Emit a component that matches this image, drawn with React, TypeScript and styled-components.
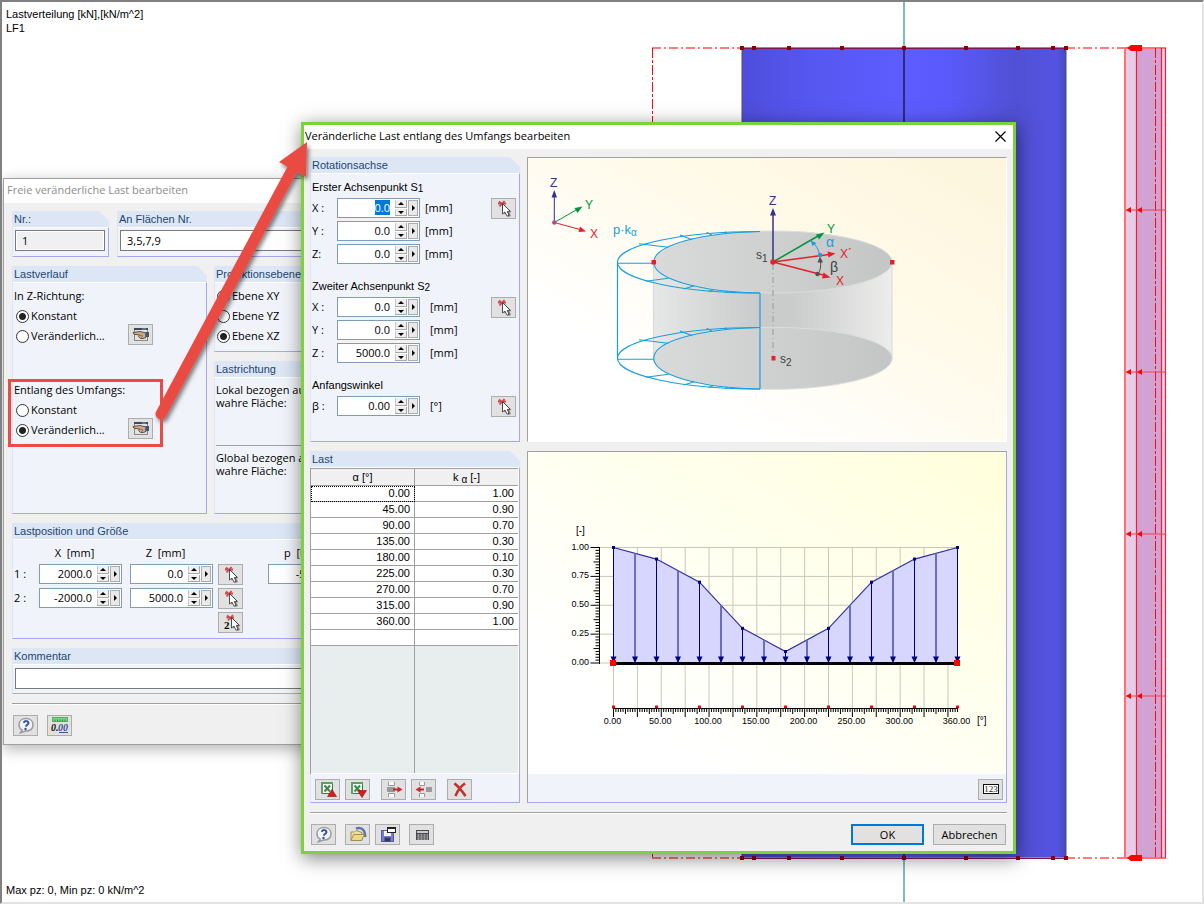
import React, { useEffect, useRef } from 'react';
import styled, { createGlobalStyle, css } from 'styled-components';

const tahoma = "'Open Sans', 'Noto Sans', sans-serif";
const arial = "'Liberation Sans', Arial, sans-serif";

const GlobalStyle = createGlobalStyle`
  *, *::before, *::after { box-sizing: border-box; }
  body { margin: 0; background: #fff; color: #000; font: 11px/14px ${tahoma}; }
  input, button { font: inherit; color: inherit; margin: 0; }
`;

/* ---------- desktop and windows ---------- */

const Desktop = styled.main`
  position: relative;
  display: flex;
  flex-direction: column;
  justify-content: space-between;
  height: 100vh;
  padding: 5px 5px 5px 4px;
  overflow: hidden;
  border-style: solid;
  border-width: 2px;
  border-color: #808080 #e3e3e3 #e3e3e3 #808080;
  font: 11px/14px ${arial};
`;

const Caption = styled.p`
  margin: 0;
  white-space: pre-line;
`;

const Scene = styled.svg`
  position: absolute;
  inset: -2px;
  width: calc(100% + 4px);
  height: calc(100% + 4px);
`;

const Callout = styled.svg`
  position: absolute;
  left: -2px;
  top: -2px;
  width: 320px;
  height: 460px;
  pointer-events: none;
`;

const Dialog = styled.section`
  position: absolute;
  display: flex;
  flex-direction: column;
  background: #f0f0f0;
  font: 11px/14px ${tahoma};
`;

const BackDialog = styled(Dialog)`
  left: 1px;
  top: 176px;
  width: 640px;
  border: 1px solid #a0a0a0;
  box-shadow: 0 4px 14px rgba(0, 0, 0, 0.3);
`;

const FrontDialog = styled(Dialog)`
  left: 299px;
  top: 120px;
  width: 715px;
  border: 3px solid #7dd13c;
  box-shadow: 1px 4px 18px rgba(0, 0, 0, 0.5);
`;

const TitleBar = styled.header<{ $inactive?: boolean }>`
  display: flex;
  align-items: center;
  justify-content: space-between;
  height: 24px;
  padding: 0 7px 2px ${p => (p.$inactive ? 3 : 1)}px;
  background: #fff;
  color: ${p => (p.$inactive ? '#8c8c8c' : '#000')};
`;

const TitleText = styled.h1`
  margin: 0;
  font: inherit;
`;

const CloseButton = styled.button`
  display: flex;
  padding: 0;
  border: 0;
  background: none;
`;

const BackBody = styled.div`
  display: flex;
  flex-direction: column;
  gap: 9px;
  padding: 8px;
`;

const BackRow = styled.div<{ $first: number; $gap: number }>`
  display: grid;
  grid-template-columns: ${p => p.$first}px 1fr;
  gap: ${p => p.$gap}px;
`;

const Stack = styled.div`
  display: flex;
  flex-direction: column;
  gap: 9px;
`;

const Footer = styled.footer`
  display: flex;
  gap: 9px;
  padding: 11px 1px 0;
  border-top: 1px solid #a0a0a0;
  box-shadow: inset 0 1px 0 #fff;
`;

/* ---------- group boxes ---------- */

const GroupBox = styled.section<{ $h?: number; $grow?: boolean }>`
  display: flex;
  flex-direction: column;
  min-width: 0;
  ${p => p.$h && css`height: ${p.$h}px;`}
  ${p => p.$grow && css`flex: 1;`}
`;

const GroupTitle = styled.h2`
  height: 16px;
  margin: 0;
  padding: 0 2px;
  background: #dce6f5;
  color: #1e4673;
  font: 11px/16px ${arial};
  clip-path: polygon(0 0, calc(100% - 10px) 0, 100% 10px, 100% 100%, 0 100%);
`;

const GroupBody = styled.div<{ $pad?: string }>`
  display: flex;
  flex: 1;
  flex-direction: column;
  min-height: 0;
  padding: ${p => p.$pad ?? '3px'};
  background: #f0f4fa;
  border: 1px solid #a8a8ec;
  border-top-color: #fff;
  border-left-color: #dce6f8;
`;

/* ---------- controls ---------- */

const TextInput = styled.input`
  width: 100%;
  height: 21px;
  padding: 0 6px;
  border: 1px solid #7a7a7a;
  border-radius: 0;
  background: #fff;
  &:read-only { background: #f0f0f0; box-shadow: inset 0 0 0 1px #fff; }
`;

const NarrowField = styled.div`
  padding-right: 1px;
`;

const IconButton = styled.button`
  display: flex;
  align-items: center;
  justify-content: center;
  flex: none;
  width: 25px;
  height: 21px;
  padding: 0;
  border: 1px solid #adadad;
  border-radius: 0;
  background: #e1e1e1;
`;

const PushButton = styled.button<{ $default?: boolean }>`
  width: 73px;
  height: 21px;
  padding: 0;
  border: ${p => (p.$default ? '2px solid #0078d7' : '1px solid #adadad')};
  border-radius: 0;
  background: #e1e1e1;
`;

const Line = styled.div`
  display: flex;
  align-items: center;
  justify-content: space-between;
  height: 20px;
`;

const Choice = styled.label`
  display: flex;
  align-items: center;
  gap: 2px;
  height: 20px;
  padding-left: 2px;
`;

const Radio = styled.input`
  appearance: none;
  width: 13px;
  height: 13px;
  margin: 0;
  border: 1px solid #333;
  border-radius: 50%;
  background: #fff;
  &:checked { background: radial-gradient(circle, #222 0 3px, #fff 4px); }
`;

const Spin = styled.div`
  display: grid;
  grid-template-columns: 1fr 12px 11px;
  gap: 1px;
  width: 83px;
  height: 20px;
  border: 1px solid #7f9db9;
  background: #fff;
`;

const SpinInput = styled.input`
  width: 100%;
  min-width: 0;
  height: 17px;
  padding: 0 4px 0 0;
  border: 0;
  outline: 0;
  background: transparent;
  text-align: right;
  &::selection { background: #0078d7; color: #fff; }
`;

const SpinPair = styled.span`
  display: grid;
  grid-template-rows: 1fr 1fr;
  gap: 1px;
  padding: 1px 0;
`;

const SpinButton = styled.button`
  display: flex;
  align-items: center;
  justify-content: center;
  min-width: 0;
  padding: 0;
  border: 0;
  border-radius: 0;
  background: #efefef;
  box-shadow: inset -1px -1px 0 #a8a8a8, inset 1px 0 0 #c8c8c8;
`;

const MoreButton = styled(SpinButton)`
  margin: 1px 1px 1px 0;
  border: 1px solid #adadad;
  background: #e9e9e9;
  box-shadow: none;
`;

function SpinBox({ value, label, selected }: { value: string; label: string; selected?: boolean }) {
  const ref = useRef<HTMLInputElement>(null);
  useEffect(() => {
    if (selected) {
      ref.current?.focus();
      ref.current?.select();
    }
  }, [selected]);
  return (
    <Spin>
      <SpinInput ref={ref} defaultValue={value} aria-label={label} />
      <SpinPair>
        <SpinButton aria-label={label + ' +'}>
          <svg width="6" height="3"><path d="M0 3L3 0L6 3Z" /></svg>
        </SpinButton>
        <SpinButton aria-label={label + ' −'}>
          <svg width="6" height="3"><path d="M0 0L3 3L6 0Z" /></svg>
        </SpinButton>
      </SpinPair>
      <MoreButton aria-label={label + ' …'}>
        <svg width="3" height="6"><path d="M0 0L3 3L0 6Z" /></svg>
      </MoreButton>
    </Spin>
  );
}

/* ---------- icons ---------- */

const cursor = (
  <g>
    <path d="M1.500 1L1.500 11L3.500 9.500L6 13.500L8.500 12.500L7 9L9 8.500Z" fill="#888" />
    <path d="M0 0L0 10.500L2.400 8.600L4.600 12.700L6.600 11.800L4.800 8L7.600 7.600Z" fill="#fff" stroke="#3a3a3a" strokeWidth="0.900" />
  </g>
);

const bubble = (
  <g>
    <path d="M10 1.500C6 1.500 3 4 3 7.700C3 10.300 4.200 12 6.200 13L4.500 15.800L9.500 14C14.500 14.200 17 11.500 17 7.700C17 4 14 1.500 10 1.500Z" fill="#f2f3f6" stroke="#9a9ca2" strokeWidth="1.500" />
    <path d="M7.800 5.800C8.200 3.300 12.800 3.700 12.400 6.200C12.100 7.800 10.200 7.700 9.900 9.700" fill="none" stroke="#34529c" strokeWidth="2" />
    <circle cx="9.500" cy="12" r="1.200" fill="#34529c" />
  </g>
);

const sheet = (
  <g>
    <rect x="3.500" y="1.500" width="11" height="11" fill="#f2f8f2" stroke="#3a7d48" />
    <path d="M3 1H15V3H5V13H3Z" fill="#5f9d6a" />
    <path d="M6.500 4.500L12 10.500M12 4.500L6.500 10.500" stroke="#3c8a4a" strokeWidth="2" />
  </g>
);

const icons: Record<string, React.ReactNode> = {
  help: bubble,
  pick: (
    <g>
      <path d="M5 1.500L10.500 6.500M10.500 1L5.500 6.500M4 3.500H12" stroke="#cc4a50" strokeWidth="1.800" />
      <g transform="translate(8.500 3.500)">{cursor}</g>
    </g>
  ),
  pickTwo: (
    <g>
      <path d="M6 1.500L12 6M12 1L7 6.500M5.500 3.500H13" stroke="#cc4a50" strokeWidth="1.800" />
      <g transform="translate(10.500 3.500)">{cursor}</g>
      <text x="3" y="15" fontFamily="Liberation Serif, serif" fontWeight="700" fontSize="11">2</text>
    </g>
  ),
  hand: (
    <g>
      <rect x="3.500" y="2.500" width="13" height="12" fill="#dfe2e4" stroke="#8a8a8a" />
      <path d="M3 3H17" stroke="#3f4a58" strokeWidth="2" />
      <path d="M11 3H15" stroke="#7d9fd0" strokeWidth="1" />
      <path d="M2 6.500L9 5.500L15 7V11.500L12 12.500L9.500 12.500L7.500 10.500L8.500 9L3 8.300Z" fill="#cda988" stroke="#5a4838" strokeWidth="0.900" />
      <path d="M8.500 9L11.500 9.500L10.500 12" fill="none" stroke="#80664e" strokeWidth="0.800" />
      <path d="M14.500 6H18V11H14.500Z" fill="#3d5678" />
    </g>
  ),
  units: (
    <g>
      <rect x="2.500" y="0.500" width="15" height="4" fill="#79cf7d" stroke="#58b060" />
      <path d="M5 4.500V2.500M7.500 4.500V2.500M10 4.500V2.500M12.500 4.500V2.500M15 4.500V2.500" stroke="#2f7f38" strokeWidth="0.800" />
      <text x="1" y="14" fontFamily="Liberation Serif, serif" fontStyle="italic" fontWeight="700" fontSize="10" fill="#111">0.</text>
      <text x="8" y="14" fontFamily="Liberation Serif, serif" fontStyle="italic" fontWeight="700" fontSize="10" fill="#3a5090">00</text>
      <path d="M9 15.500H18" stroke="#3a5090" />
    </g>
  ),
  excelUp: (
    <g>
      {sheet}
      <path d="M14 8.500L18.500 15.500H9.500Z" fill="#e01818" stroke="#8e0f0f" strokeWidth="0.600" />
    </g>
  ),
  excelDown: (
    <g>
      {sheet}
      <path d="M14 16.500L18.500 9.500H9.500Z" fill="#e01818" stroke="#8e0f0f" strokeWidth="0.600" />
    </g>
  ),
  insertRow: (
    <g>
      <path d="M4.500 1V4.500H10.500V1M4.500 16V12.500H10.500V16" fill="#fafafa" stroke="#999" />
      <rect x="3" y="6" width="8" height="5" fill="#9a9a9a" />
      <path d="M9 8.500H15" stroke="#b8282e" strokeWidth="2" />
      <path d="M13.500 5.500L18.500 8.500L13.500 11.500Z" fill="#c8282e" />
    </g>
  ),
  removeRow: (
    <g>
      <path d="M5.500 1V4.500H10.500V1M5.500 16V12.500H10.500V16" fill="#fafafa" stroke="#999" />
      <rect x="12" y="6" width="6" height="5" fill="#9a9a9a" />
      <path d="M5 8.500H10" stroke="#b8282e" strokeWidth="2" />
      <path d="M6.500 5.500L1.500 8.500L6.500 11.500Z" fill="#c8282e" />
    </g>
  ),
  erase: (
    <g>
      <path d="M4.500 2.500C8 5 12 10 15.500 15M15 2.500C11 5 7.500 10 5.500 15" fill="none" stroke="#8a3a3a" strokeWidth="2.600" />
      <path d="M4.500 2.500C8 5 12 10 15.500 15M15 2.500C11 5 7.500 10 5.500 15" fill="none" stroke="#dc2a2a" strokeWidth="1.500" />
    </g>
  ),
  open: (
    <g>
      <path d="M8 2.500C13 0.500 18 4 17 11" fill="none" stroke="#5877a8" strokeWidth="2.500" />
      <path d="M3 14.500V6H6.500L8 4.500L14 6.500V14.500Z" fill="#efe3a4" stroke="#a08f50" />
      <path d="M3 14.500L5.500 8.500H16.500L13.500 14.500Z" fill="#ecd987" stroke="#a08f50" />
    </g>
  ),
  save: (
    <g>
      <rect x="3.500" y="4.500" width="12" height="11" fill="#7a7ad0" stroke="#5a5aa4" />
      <rect x="6" y="5" width="7" height="5" fill="#f2f2f8" />
      <rect x="6.500" y="11.500" width="6" height="4" fill="#333a55" />
      <rect x="9.500" y="1.500" width="8" height="5" fill="#fff" stroke="#222" />
      <path d="M9 2H18" stroke="#222" strokeWidth="2" />
    </g>
  ),
  calc: (
    <g>
      <path d="M4 4H17V14H4Z" fill="#4a4a4e" />
      <rect x="5" y="5" width="11" height="2" fill="#c6ccc8" />
      <path d="M5.500 9H16M5.500 11H16M5.500 13H16" stroke="#e8e8e8" strokeDasharray="2 1" />
    </g>
  ),
  digits: (
    <g>
      <rect x="2.500" y="3.500" width="15" height="9" fill="#fff" stroke="#111" />
      <text x="10" y="11" textAnchor="middle" fontFamily="Liberation Serif, serif" fontSize="9" fill="#222">123</text>
    </g>
  ),
};

function Tool({ icon, label }: { icon: string; label: string }) {
  return (
    <IconButton aria-label={label}>
      <svg width="20" height="17" viewBox="0 0 20 17">{icons[icon]}</svg>
    </IconButton>
  );
}

/* ---------- background model view ---------- */

const nodeXs = [742, 754, 789, 842, 904, 966, 1018, 1053, 1066];

function ModelScene() {
  return (
    <Scene viewBox="0 0 1204 904" aria-hidden="true">
      <defs>
        <linearGradient id="tank">
          <stop offset="0" stopColor="#4e4edb" />
          <stop offset="0.200" stopColor="#5656f0" />
          <stop offset="0.500" stopColor="#5d5dff" />
          <stop offset="0.630" stopColor="#5a5afc" />
          <stop offset="0.850" stopColor="#5050d4" />
          <stop offset="0.970" stopColor="#5454e2" />
          <stop offset="1" stopColor="#4848c4" />
        </linearGradient>
      </defs>
      <path d="M904 2V902" stroke="#80bdbd" strokeWidth="2" />
      <rect x="742" y="48" width="324" height="810" fill="url(#tank)" stroke="#4a4a78" />
      <path d="M904 48V858" stroke="#2c2c80" strokeWidth="2" />
      <path d="M652 48H742M1066 48H1128M652 858H742M1066 858H1128" stroke="#ff7c7c" strokeWidth="2" strokeDasharray="9 3 2 3" />
      <path d="M652.500 48V858" stroke="#ee1010" strokeDasharray="10 2 3 2" />
      <path d="M742 47.500H1066M742 857.500H1066" stroke="#f06080" />
      <path d="M742 48.500H1066M742 858.500H1066" stroke="#801850" />
      {[48, 858].map(y => nodeXs.map(x => <rect key={x + '-' + y} x={x - 2} y={y - 2} width="4" height="4" fill="#8c0000" />))}
      <rect x="1125" y="48" width="41" height="810" fill="#e6cce6" />
      <rect x="1137" y="48" width="25" height="810" fill="#d2a2d2" />
      <path d="M1125 48H1166M1125 858H1166M1125 48V858" stroke="#ff7070" strokeWidth="2" />
      <path d="M1136.500 48V858M1161.500 48V858M1165.500 48V858" stroke="#f02030" strokeWidth="1.200" />
      <path d="M1155.500 48V858" stroke="#ee1010" strokeDasharray="10 2 3 2" />
      {[48, 858].map(y => (
        <path key={y} d={`M1127 ${y}L1131 ${y - 3}H1142V${y + 3}H1131Z`} fill="#f00" />
      ))}
      {[210, 372, 534, 696].map(y => (
        <g key={y} fill="#f00">
          <path d={`M1126 ${y}H1166`} stroke="#ee4050" />
          <path d={`M1126 ${y}L1131 ${y - 3}V${y + 3}ZM1137 ${y}L1142 ${y - 3}V${y + 3}Z`} />
        </g>
      ))}
    </Scene>
  );
}

/* ---------- front dialog panels ---------- */

const FrontBody = styled.div`
  display: flex;
  flex-direction: column;
  gap: 9px;
  padding: 8px 6px 6px;
`;

const Panels = styled.div`
  display: grid;
  grid-template-columns: 210px 1fr;
  grid-template-rows: 285px 352px;
  gap: 9px 7px;
`;

const DrawingPanel = styled.div`
  border: 1px solid #a0a0a0;
  border-right-color: #fff;
  border-bottom-color: #fff;
  background: linear-gradient(to top right, #fff 25%, #fffaea 60%, #fdf5dc);
`;

const ChartPanel = styled.div`
  display: flex;
  flex-direction: column;
  border: 1px solid #a0a0a0;
  border-right-color: #a8a8ec;
  border-bottom-color: #a8a8ec;
  background: #f0f4fa;
`;

const ChartArea = styled.div`
  flex: 1;
  min-height: 0;
  border-bottom: 1px solid #fff;
  background: linear-gradient(to top right, #fff 20%, #fffff0 55%, #ffffdc);
`;

const Drawing = styled.svg`
  display: block;
  width: 100%;
  height: 100%;
  font-family: ${arial};
`;

const Toolbar = styled.div<{ $end?: boolean }>`
  display: flex;
  justify-content: ${p => (p.$end ? 'flex-end' : 'flex-start')};
  gap: 5px;
  padding: 5px ${p => (p.$end ? 3 : 4)}px 2px;
`;

const ToolGroup = styled.div`
  display: flex;
  gap: 5px;
`;

const SpacedGroup = styled(ToolGroup)`
  margin-right: 6px;
`;

const PointSection = styled.section`
  display: grid;
  grid-template-columns: 25px 83px 1fr 25px;
  row-gap: 3px;
  align-items: center;
  margin-bottom: 14px;
`;

const PointTitle = styled.h3`
  grid-column: 1 / -1;
  height: 16px;
  margin: 0;
  font: 11px/16px ${arial};
  sub { font-size: 10px; line-height: 0; vertical-align: -1px; }
`;

const Unit = styled.span<{ $wide?: boolean }>`
  padding-left: ${p => (p.$wide ? 10 : 5)}px;
`;

const PushCell = styled.span`
  grid-column: 4;
  height: 20px;
`;

type Row = { axis: string; value: string };

function Point({ title, rows, unit, wide, selected }: {
  title: React.ReactNode; rows: Row[]; unit: string; wide?: boolean; selected?: boolean;
}) {
  return (
    <PointSection>
      <PointTitle>{title}</PointTitle>
      {rows.map((r, i) => (
        <React.Fragment key={r.axis}>
          <span>{r.axis}</span>
          <SpinBox value={r.value} label={r.axis} selected={selected && i === 0} />
          <Unit $wide={wide}>{unit}</Unit>
          {i === 0 ? <PushCell><Tool icon="pick" label="Auswählen" /></PushCell> : <span />}
        </React.Fragment>
      ))}
    </PointSection>
  );
}

const Table = styled.table`
  width: 100%;
  border-collapse: collapse;
  table-layout: fixed;
  background: #fff;
  font: 11px/15px ${arial};
  th, td { height: 16px; padding: 0 4px; border-bottom: 1px solid #a0a0a0; text-align: right; }
  th { height: 17px; background: #f0f0f0; border-top: 1px solid #a0a0a0; font-weight: 400; text-align: center; }
  th:first-child, td:first-child { border-right: 1px solid #a0a0a0; }
  sub { font-size: 10px; line-height: 0; vertical-align: -2px; }
  tbody tr:first-child td:first-child { outline: 1px dotted #000; outline-offset: -1px; }
`;

const TableArea = styled.div`
  display: flex;
  flex: 1;
  flex-direction: column;
  margin-left: -1px;
  border-left: 1px solid #a0a0a0;
  border-right: 1px solid #fff;
`;

const TableRest = styled.div`
  display: grid;
  grid-template-columns: 1fr 1fr;
  flex: 1;
  background: #e8eeee;
  border-bottom: 1px solid #fff;
`;

const RestCell = styled.div`
  &:first-child { border-right: 1px solid #a0a0a0; }
`;

const FooterTools = styled.div`
  display: flex;
  flex: 1;
  gap: 9px;
`;

const loads: [number, number][] = [
  [0, 1], [45, 0.9], [90, 0.7], [135, 0.3], [180, 0.1], [225, 0.3], [270, 0.7], [315, 0.9], [360, 1],
];

/* ---------- cylinder sketch ---------- */

const rungs = [
  'M653.700 263.300H617.300', 'M639 243.700L668.300 247.300', 'M680 235L692.300 239.700', 'M706.700 232.300L711.700 235',
  'M725 231.700L727 233.300', 'M645.700 281.300L668.300 278.300', 'M683.700 289L694.300 285.700',
  'M708.300 291.700L713.300 289.700', 'M725 292.700L728 291.300',
].join('');

function Ring() {
  return (
    <g fill="none" stroke="#18a0dc" strokeWidth="1.100">
      <path d="M760 231.500A142.500 30.750 0 0 0 760 293" />
      <path d="M760 231.500C700 233 653.700 245 653.700 262.300C653.700 279 700 292 760 293" />
      <path d={rungs} />
    </g>
  );
}

function CylinderSketch() {
  return (
    <Drawing viewBox="528 158 478 283" role="img" aria-label="Rotationsachse">
      <defs>
        <linearGradient id="side">
          <stop offset="0" stopColor="#e6e7e7" />
          <stop offset="0.450" stopColor="#c9caca" />
          <stop offset="0.600" stopColor="#cbcccc" />
          <stop offset="1" stopColor="#ededec" />
        </linearGradient>
        <linearGradient id="lid">
          <stop offset="0" stopColor="#d9dada" />
          <stop offset="1" stopColor="#c4c5c5" />
        </linearGradient>
      </defs>
      <path d="M653.500 262V358A119.300 31 0 0 0 892 358V262Z" fill="url(#side)" stroke="#d6d7d7" />
      <ellipse cx="772.800" cy="358.300" rx="119.300" ry="31" fill="url(#lid)" stroke="#dcdddd" />
      <ellipse cx="772.800" cy="262" rx="119.300" ry="31" fill="url(#lid)" stroke="#dcdddd" />
      <path d="M773 264V356" stroke="#999" strokeDasharray="6 3 1 3" />
      <Ring />
      <g transform="translate(0 96)"><Ring /></g>
      <path d="M617.500 263V359M760 293V389" stroke="#18a0dc" strokeWidth="1.200" />
      <g strokeWidth="1.500">
        <path d="M773 262V214" stroke="#35308c" />
        <path d="M773 208L770 215.500H776Z" fill="#35308c" />
        <path d="M773 262L818 236" stroke="#009540" />
        <path d="M824.500 232.500L816 234.500L819 239.500Z" fill="#009540" />
        <path d="M773 262L829 254.500M773 262L823 275" stroke="#e2222a" />
        <path d="M835.500 253.500L827.500 251.500L828.500 257.500ZM830.500 277.500L823.500 272.500L822 278.500Z" fill="#e2222a" />
      </g>
      <path d="M820 255Q818 247 813 242" fill="none" stroke="#18a0dc" />
      <path d="M810.500 240.500L816.500 243L812.500 246Z" fill="#18a0dc" />
      <circle cx="820" cy="255" r="2.200" fill="#18a0dc" />
      <path d="M818 274Q821.500 269 820.500 261" fill="none" stroke="#505050" />
      <path d="M820 256.500L817.500 262.500H823Z" fill="#505050" />
      <circle cx="817.500" cy="274" r="2.200" fill="#505050" />
      <circle cx="773" cy="262" r="2.700" fill="#e2222a" />
      <path d="M651.500 260H656V264.500H651.500ZM890 260H894.500V264.500H890ZM771.500 356H775.500V360.500H771.500Z" fill="#e2222a" />
      <path d="M554.300 222V196" stroke="#35308c" />
      <path d="M554.300 190L551.500 197.500H557Z" fill="#35308c" />
      <path d="M554.300 222.500L577 209.500" stroke="#009540" />
      <path d="M582.500 206.500L574.500 208L577.500 213Z" fill="#009540" />
      <path d="M554.300 222.500L580 229.500" stroke="#e2222a" />
      <path d="M586 231.500L580 226.500L578.500 232Z" fill="#e2222a" />
      <circle cx="554.300" cy="222.500" r="2.200" fill="#b04a90" />
      <g fontSize="12">
        <text x="550" y="187" fill="#35308c">Z</text>
        <text x="585" y="209" fill="#009540">Y</text>
        <text x="590" y="238" fill="#e2222a">X</text>
        <text x="769" y="205" fill="#35308c">Z</text>
        <text x="827" y="233" fill="#009540">Y</text>
        <text x="840" y="258" fill="#e2222a">X´</text>
        <text x="836" y="285" fill="#e2222a">X</text>
        <text x="613" y="234" fill="#18a0dc" fontSize="13">p·k<tspan fontSize="10" dy="2">α</tspan></text>
        <text x="826" y="247" fill="#18a0dc" fontSize="14">α</text>
        <text x="830" y="272" fill="#404040" fontSize="14">β</text>
        <text x="756" y="259" fill="#404040">s<tspan fontSize="10" dy="3">1</tspan></text>
        <text x="780" y="363" fill="#404040">s<tspan fontSize="10" dy="3">2</tspan></text>
      </g>
    </Drawing>
  );
}

/* ---------- load chart ---------- */

const px = (deg: number) => 613.5 + (deg / 360) * 344;
const py = (k: number) => 663 - k * 115.5;

function factorAt(deg: number) {
  const i = Math.min(Math.floor(deg / 45), 7);
  const [a, ka] = loads[i];
  const [, kb] = loads[i + 1];
  return ka + ((deg - a) / 45) * (kb - ka);
}

const range = (n: number) => Array.from({ length: n }, (_, i) => i);
const curve = loads.map(([a, k]) => `${px(a)} ${py(k)}`).join('L');

function LoadChart() {
  return (
    <Drawing viewBox="528 452 478 321" role="img" aria-label="Last">
      <g stroke="#c8c8b8">
        {range(15).map(i => <path key={i} d={`M${px(i * 25)} 547V708`} />)}
        {range(5).map(i => <path key={i} d={`M600 ${py(i / 4)}H957`} />)}
      </g>
      <path d={`M${px(0)} 663L${curve}L${px(360)} 663Z`} fill="#d6d6ff" />
      <path d={`M${curve}`} fill="none" stroke="#30309c" strokeWidth="1.200" />
      {range(17).map(i => {
        const deg = i * 22.5;
        const x = px(deg);
        return (
          <g key={i}>
            <path d={`M${x} ${py(factorAt(deg))}V662`} stroke={i % 2 ? '#6c6cc0' : '#000080'} strokeWidth={i % 2 ? 2 : 1} />
            <path d={`M${x - 3} 656.500H${x + 3}L${x} 663Z`} fill="#000080" />
          </g>
        );
      })}
      <path d={`M${px(0)} 663.500H${px(360)}`} stroke="#000" strokeWidth="3" />
      <path d="M610 660H616V666H610ZM954 660H960V666H954Z" fill="#f00" />
      {loads.map(([a, k]) => (
        <g key={a}>
          <rect x={px(a) - 1.5} y={py(k) - 1.5} width="3" height="3" fill="#000080" />
          <rect x={px(a) - 1.5} y="705.500" width="3" height="3" fill="#f00" />
        </g>
      ))}
      <g stroke="#000">
        <path d="M599.500 547V664M613 708.500H958" />
        {range(41).map(i => (
          <path key={i} d={`M599.500 ${py(i / 40)}h-${i % 10 === 0 ? 9 : i % 5 === 0 ? 6 : 4}`} />
        ))}
        {range(145).map(i => (
          <path key={i} d={`M${px(i * 2.5)} 708v${i % 10 === 0 ? 9 : i % 5 === 0 ? 6 : 4}`} />
        ))}
      </g>
      <g fontSize="9">
        <text x="576" y="534" fontSize="10">[-]</text>
        {range(5).map(i => (
          <text key={i} x="589" y={py(i / 4) + 2} textAnchor="end">{(i / 4).toFixed(2)}</text>
        ))}
        {[0, 50, 100, 150, 200, 250, 300, 360].map(d => (
          <text key={d} x={px(d) - 1} y="724" textAnchor="middle">{d.toFixed(2)}</text>
        ))}
        <text x="977" y="724" fontSize="10">[°]</text>
      </g>
    </Drawing>
  );
}

/* ---------- back dialog ---------- */

const TwoLines = styled.p`
  margin: 0 0 36px;
  padding-top: 5px;
  line-height: 13px;
  white-space: pre-line;
`;

const Separator = styled.hr`
  width: 100%;
  margin: 0;
  border: 0;
  border-top: 1px solid #a0a0a0;
`;

const RadioSet = styled.fieldset`
  min-width: 0;
  margin: 0 0 34px;
  padding: 0;
  border: 0;
`;

const LineEnd = styled.div`
  display: flex;
  padding: 0 51px 3px 0;
`;

const PositionGrid = styled.div`
  display: grid;
  grid-template-columns: 25px 91px 88px 50px 83px;
  grid-template-rows: 22px 24px 24px 24px;
  align-items: center;
`;

const ColumnHead = styled.span<{ $start?: boolean }>`
  width: 71px;
  padding: 4px 0 0 ${p => (p.$start ? 16 : 0)}px;
  text-align: ${p => (p.$start ? 'left' : 'center')};
  white-space: pre;
`;

function CourseChoice({ title, name, variable }: { title: string; name: string; variable?: boolean }) {
  return (
    <RadioSet aria-label={title}>
      <Line>{title}</Line>
      <Choice><Radio type="radio" name={name} defaultChecked={!variable} />Konstant</Choice>
      <Line>
        <Choice><Radio type="radio" name={name} defaultChecked={variable} />Veränderlich...</Choice>
        <LineEnd><Tool icon="hand" label={title + ' bearbeiten'} /></LineEnd>
      </Line>
    </RadioSet>
  );
}

function FreeLoadDialog() {
  return (
    <BackDialog>
      <TitleBar $inactive><TitleText>Freie veränderliche Last bearbeiten</TitleText></TitleBar>
      <BackBody>
        <BackRow $first={97} $gap={8}>
          <GroupBox $h={46}>
            <GroupTitle>Nr.:</GroupTitle>
            <GroupBody $pad="2px"><NarrowField><TextInput readOnly value="1" aria-label="Nr." /></NarrowField></GroupBody>
          </GroupBox>
          <GroupBox $h={46}>
            <GroupTitle>An Flächen Nr.</GroupTitle>
            <GroupBody $pad="2px"><TextInput defaultValue="3,5,7,9" aria-label="An Flächen Nr." /></GroupBody>
          </GroupBox>
        </BackRow>
        <BackRow $first={195} $gap={7}>
          <GroupBox $h={248}>
            <GroupTitle>Lastverlauf</GroupTitle>
            <GroupBody $pad="3px 2px 0 1px">
              <CourseChoice title="In Z-Richtung:" name="z" />
              <CourseChoice title="Entlang des Umfangs:" name="u" variable />
            </GroupBody>
          </GroupBox>
          <Stack>
            <GroupBox $h={86}>
              <GroupTitle>Projektionsebene</GroupTitle>
              <GroupBody $pad="3px 0">
                <Choice><Radio type="radio" name="plane" />Ebene XY</Choice>
                <Choice><Radio type="radio" name="plane" />Ebene YZ</Choice>
                <Choice><Radio type="radio" name="plane" defaultChecked />Ebene XZ</Choice>
              </GroupBody>
            </GroupBox>
            <GroupBox $grow>
              <GroupTitle>Lastrichtung</GroupTitle>
              <GroupBody $pad="0 1px">
                <TwoLines>{'Lokal bezogen auf\nwahre Fläche:'}</TwoLines>
                <Separator />
                <TwoLines>{'Global bezogen auf\nwahre Fläche:'}</TwoLines>
              </GroupBody>
            </GroupBox>
          </Stack>
        </BackRow>
        <GroupBox $h={116}>
          <GroupTitle>Lastposition und Größe</GroupTitle>
          <GroupBody $pad="0 1px">
            <PositionGrid>
              <span />
              <ColumnHead>X  [mm]</ColumnHead>
              <ColumnHead>Z  [mm]</ColumnHead>
              <span />
              <ColumnHead $start>p  [kN/m²]</ColumnHead>
              <span>1 :</span>
              <SpinBox value="2000.0" label="X 1" />
              <SpinBox value="0.0" label="Z 1" />
              <Tool icon="pick" label="Punkt 1" />
              <SpinBox value="-5.00" label="p" />
              <span>2 :</span>
              <SpinBox value="-2000.0" label="X 2" />
              <SpinBox value="5000.0" label="Z 2" />
              <Tool icon="pick" label="Punkt 2" />
              <span />
              <span />
              <span />
              <span />
              <Tool icon="pickTwo" label="Zwei Punkte" />
            </PositionGrid>
          </GroupBody>
        </GroupBox>
        <GroupBox $h={46}>
          <GroupTitle>Kommentar</GroupTitle>
          <GroupBody $pad="3px 2px"><TextInput aria-label="Kommentar" /></GroupBody>
        </GroupBox>
        <Footer>
          <Tool icon="help" label="Hilfe" />
          <Tool icon="units" label="Einheiten" />
        </Footer>
      </BackBody>
    </BackDialog>
  );
}

function CircumferenceDialog() {
  return (
    <FrontDialog>
      <TitleBar>
        <TitleText>Veränderliche Last entlang des Umfangs bearbeiten</TitleText>
        <CloseButton aria-label="Schließen">
          <svg width="11" height="11"><path d="M0.500 0.500L10.500 10.500M10.500 0.500L0.500 10.500" stroke="#000" strokeWidth="1.200" /></svg>
        </CloseButton>
      </TitleBar>
      <FrontBody>
        <Panels>
          <GroupBox>
            <GroupTitle>Rotationsachse</GroupTitle>
            <GroupBody $pad="5px 3px 0 1px">
              <Point title={<>Erster Achsenpunkt S<sub>1</sub></>} unit="[mm]" selected
                rows={[{ axis: 'X :', value: '0.0' }, { axis: 'Y :', value: '0.0' }, { axis: 'Z:', value: '0.0' }]} />
              <Point title={<>Zweiter Achsenpunkt S<sub>2</sub></>} unit="[mm]" wide
                rows={[{ axis: 'X :', value: '0.0' }, { axis: 'Y :', value: '0.0' }, { axis: 'Z :', value: '5000.0' }]} />
              <Point title="Anfangswinkel" unit="[°]" wide rows={[{ axis: 'β :', value: '0.00' }]} />
            </GroupBody>
          </GroupBox>
          <DrawingPanel><CylinderSketch /></DrawingPanel>
          <GroupBox>
            <GroupTitle>Last</GroupTitle>
            <GroupBody $pad="0">
              <TableArea>
                <Table>
                  <thead>
                    <tr><th>α [°]</th><th>k <sub>α</sub> [-]</th></tr>
                  </thead>
                  <tbody>
                    {loads.map(([a, k]) => (
                      <tr key={a}><td>{a.toFixed(2)}</td><td>{k.toFixed(2)}</td></tr>
                    ))}
                    <tr><td /><td /></tr>
                  </tbody>
                </Table>
                <TableRest><RestCell /><RestCell /></TableRest>
              </TableArea>
              <Toolbar>
                <SpacedGroup>
                  <Tool icon="excelUp" label="Excel-Export" />
                  <Tool icon="excelDown" label="Excel-Import" />
                </SpacedGroup>
                <SpacedGroup>
                  <Tool icon="insertRow" label="Zeile einfügen" />
                  <Tool icon="removeRow" label="Zeile entfernen" />
                </SpacedGroup>
                <Tool icon="erase" label="Löschen" />
              </Toolbar>
            </GroupBody>
          </GroupBox>
          <ChartPanel>
            <ChartArea><LoadChart /></ChartArea>
            <Toolbar $end><Tool icon="digits" label="Werte" /></Toolbar>
          </ChartPanel>
        </Panels>
        <Footer>
          <FooterTools>
            <Tool icon="help" label="Hilfe" />
            <ToolGroup>
              <Tool icon="open" label="Öffnen" />
              <Tool icon="save" label="Speichern" />
            </ToolGroup>
            <Tool icon="calc" label="Rechner" />
          </FooterTools>
          <PushButton $default>OK</PushButton>
          <PushButton>Abbrechen</PushButton>
        </Footer>
      </FrontBody>
    </FrontDialog>
  );
}

function ArrowCallout() {
  return (
    <Callout viewBox="0 0 320 460" aria-hidden="true">
      <defs>
        <filter id="soft" x="-10%" y="-10%" width="130%" height="120%">
          <feDropShadow dx="2" dy="3" stdDeviation="2" floodOpacity="0.500" />
        </filter>
      </defs>
      <g filter="url(#soft)">
        <path d="M161 414L293 168" stroke="#e94b43" strokeWidth="11" strokeLinecap="round" />
        <path d="M307 142L279 162L306 177Z" fill="#e94b43" />
      </g>
      <rect x="9.500" y="380.500" width="152" height="65" fill="none" stroke="#ea4b44" strokeWidth="3" />
    </Callout>
  );
}

export default function App() {
  return (
    <>
      <GlobalStyle />
      <Desktop>
        <Caption>{'Lastverteilung [kN],[kN/m^2]\nLF1'}</Caption>
        <Caption>Max pz: 0, Min pz: 0 kN/m^2</Caption>
        <ModelScene />
        <FreeLoadDialog />
        <CircumferenceDialog />
        <ArrowCallout />
      </Desktop>
    </>
  );
}
